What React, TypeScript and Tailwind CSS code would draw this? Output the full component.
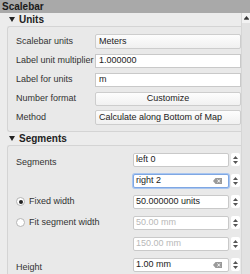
import { ReactNode } from 'react';

const font = { fontFamily: '"Liberation Sans", Arial, sans-serif' };

function SectionHeader({ title }: { title: string }) {
  return (
    <div className="h-[13px] flex items-center pl-[9px] gap-[4px] text-[10px] font-bold text-[#222]">
      <svg width="6" height="5" viewBox="0 0 6 5">
        <path d="M0 0H6L3 5Z" fill="#222" />
      </svg>
      <span>{title}</span>
    </div>
  );
}

function Row({ label, children }: { label: string; children: ReactNode }) {
  return (
    <div className="flex items-center h-[19px]">
      <span className="w-[79px] shrink-0 text-[9px] text-[#333] whitespace-nowrap">{label}</span>
      <div className="flex-1">{children}</div>
    </div>
  );
}

function TextBox({ value }: { value: string }) {
  return (
    <div className="h-[14px] bg-white border border-[#c9c9c9] flex items-center px-[3px] text-[9px] text-[#222]">
      {value}
    </div>
  );
}

function ComboBox({ value }: { value: string }) {
  return (
    <div className="h-[15px] rounded-[2px] bg-gradient-to-b from-[#fdfdfd] to-[#f0f0f0] border border-[#cdcdcd] flex items-center px-[3px] text-[9px] text-[#222] whitespace-nowrap overflow-hidden">
      {value}
    </div>
  );
}

function Stepper() {
  return (
    <div className="w-[9px] h-[13px] flex flex-col items-center justify-center gap-[2px] bg-white rounded-[2px]">
      <svg width="5" height="3" viewBox="0 0 5 3">
        <path d="M0 3L2.5 0L5 3Z" fill="#555" />
      </svg>
      <svg width="5" height="3" viewBox="0 0 5 3">
        <path d="M0 0L2.5 3L5 0Z" fill="#555" />
      </svg>
    </div>
  );
}

function SpinBox({
  value,
  disabled,
  focused,
  clear,
}: {
  value: string;
  disabled?: boolean;
  focused?: boolean;
  clear?: boolean;
}) {
  return (
    <div className="flex items-center gap-[2px]">
      <div
        className={`flex-1 h-[14px] bg-white flex items-center justify-between px-[2px] text-[9px] rounded-[2px] ${
          focused ? 'border border-[#7fa7e3] shadow-[0_0_0_1px_#a9c6f0]' : 'border border-[#c9c9c9]'
        } ${disabled ? 'text-[#b8b8b8]' : 'text-[#222]'}`}
      >
        <span>{value}</span>
        {clear && (
          <svg width="9" height="6" viewBox="0 0 9 6" className="mr-[4px]">
            <path d="M2.5 0H9V6H2.5L0 3Z" fill="#9a9a9a" />
            <path d="M4.5 1.5L7 4.5M7 1.5L4.5 4.5" stroke="#fff" strokeWidth="0.9" />
          </svg>
        )}
      </div>
      <Stepper />
    </div>
  );
}

function Radio({ checked, label }: { checked?: boolean; label: string }) {
  return (
    <div className="flex items-center gap-[4px] text-[9px] text-[#333] whitespace-nowrap">
      <div className="w-[9px] h-[9px] rounded-full bg-white border border-[#b5b5b5] flex items-center justify-center">
        {checked && <div className="w-[4px] h-[4px] rounded-full bg-[#222]" />}
      </div>
      <span>{label}</span>
    </div>
  );
}

function SegRow({ left, children }: { left?: ReactNode; children: ReactNode }) {
  return (
    <div className="flex items-center h-[21px]">
      <div className="w-[117px] shrink-0">{left}</div>
      <div className="flex-1">{children}</div>
    </div>
  );
}

export default function App() {
  return (
    <div className="w-[250px] h-[274px] overflow-hidden bg-[#ececec] flex flex-col" style={font}>
      <div className="h-[13px] shrink-0 bg-[#a9a9a9] flex items-center pl-[2px] text-[10px] font-bold text-[#1a1a1a]">
        Scalebar
      </div>
      <div className="flex flex-1 min-h-0">
        <div className="w-[241px] shrink-0 flex flex-col">
          <SectionHeader title="Units" />
          <div className="ml-[7px] border border-r-0 border-[#d4d4d4] rounded-l-[3px] bg-[#e9e9e9] pl-[8px] pt-[5px] pb-[4px]">
            <Row label="Scalebar units">
              <ComboBox value="Meters" />
            </Row>
            <Row label="Label unit multiplier">
              <TextBox value="1.000000" />
            </Row>
            <Row label="Label for units">
              <TextBox value="m" />
            </Row>
            <Row label="Number format">
              <div className="h-[14px] rounded-[2px] bg-gradient-to-b from-[#fdfdfd] to-[#f1f1f1] border border-[#cdcdcd] flex items-center justify-center text-[9px] text-[#222]">
                Customize
              </div>
            </Row>
            <Row label="Method">
              <ComboBox value="Calculate along Bottom of Map" />
            </Row>
          </div>
          <div className="h-[5px]" />
          <SectionHeader title="Segments" />
          <div className="ml-[7px] border border-r-0 border-b-0 border-[#d4d4d4] rounded-tl-[3px] bg-[#e9e9e9] pl-[8px] pr-[1px] pt-[3px] flex-1">
            <SegRow left={<span className="text-[9px] text-[#333]">Segments</span>}>
              <SpinBox value="left 0" />
            </SegRow>
            <SegRow>
              <SpinBox value="right 2" focused clear />
            </SegRow>
            <SegRow left={<Radio checked label="Fixed width" />}>
              <SpinBox value="50.000000 units" />
            </SegRow>
            <SegRow left={<Radio label="Fit segment width" />}>
              <SpinBox value="50.00 mm" disabled />
            </SegRow>
            <SegRow>
              <SpinBox value="150.00 mm" disabled />
            </SegRow>
            <SegRow left={<span className="text-[9px] text-[#333]">Height</span>}>
              <SpinBox value="1.00 mm" clear />
            </SegRow>
          </div>
        </div>
        <div className="w-[9px] shrink-0 bg-[#e2e2e2] border-l border-[#d6d6d6] flex flex-col">
          <div className="h-[10px] bg-[#f2f2f2] flex items-center justify-center">
            <svg width="5" height="4" viewBox="0 0 5 4">
              <path d="M0 3L2.5 0L5 3Z" fill="#333" />
              <rect x="0" y="3.3" width="5" height="0.7" fill="#333" />
            </svg>
          </div>
        </div>
      </div>
    </div>
  );
}
